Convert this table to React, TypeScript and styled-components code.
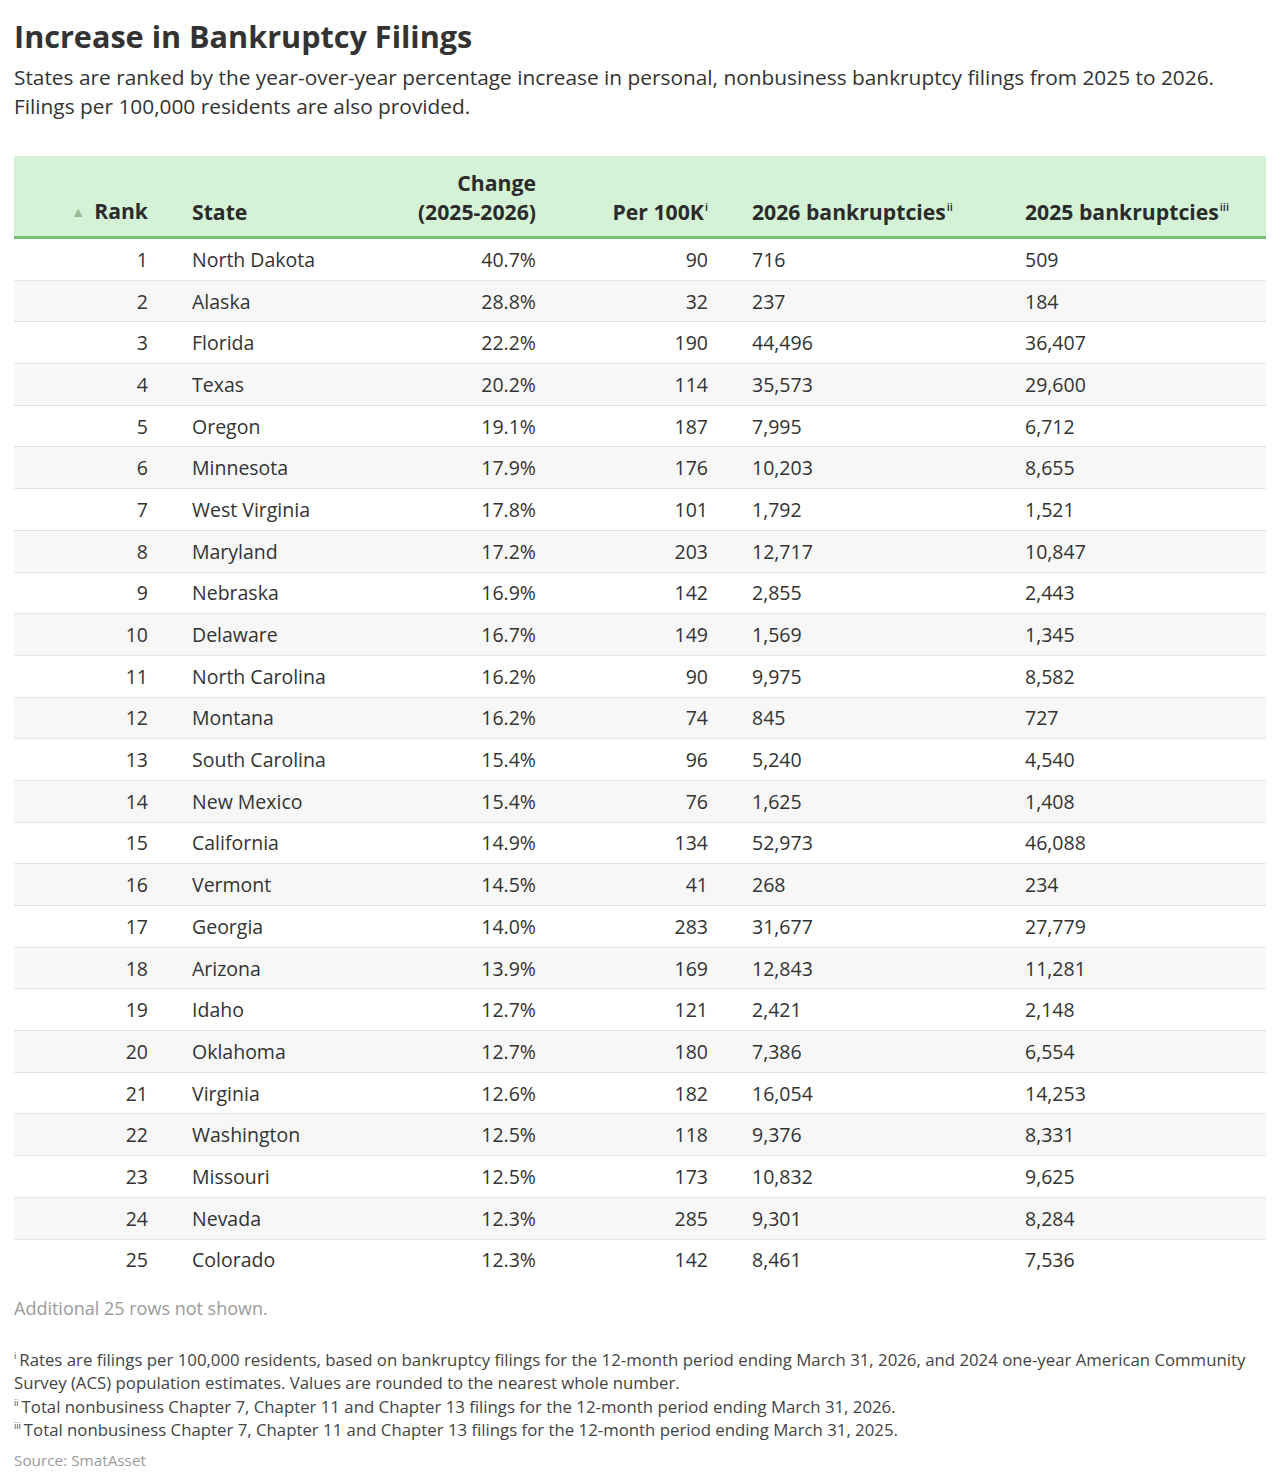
import React from "react";
import styled, { createGlobalStyle } from "styled-components";

const GlobalStyle = createGlobalStyle`
  body {
    margin: 0;
    background: #ffffff;
    font-family: "Open Sans", "Noto Sans", sans-serif;
    color: #333333;
  }
`

const Page = styled.div`
  padding: 16px 14px 12px 14px;
`

const Title = styled.h1`
  margin: 0;
  font-size: 30.6px;
  line-height: 40px;
  font-weight: 700;
  color: #333333;
`

const Subtitle = styled.p`
  margin: 7px 0 0 0;
  font-size: 20.85px;
  line-height: 29px;
  color: #333333;
`

const Table = styled.table`
  margin-top: 35px;
  width: 100%;
  border-collapse: collapse;
  table-layout: fixed;
  font-size: 19.5px;
`

const HeadRow = styled.tr`
  background: #d4f3d6;
  border-bottom: 3px solid #74c06c;
`

const HeadCell = styled.th<{ $align?: "left" | "right" }>`
  height: 70px;
  padding: 0 22px 10px 22px;
  vertical-align: bottom;
  text-align: ${p => p.$align || "left"};
  font-size: 21.2px;
  font-weight: 700;
  line-height: 29px;
  color: #2b2b2b;
  white-space: nowrap;
`

const Row = styled.tr<{ $shade: boolean; $last: boolean }>`
  background: ${p => (p.$shade ? "#f7f7f7" : "#ffffff")};
  border-bottom: ${p => (p.$last ? "none" : "1px solid #e4e4e4")};
`

const Cell = styled.td<{ $align?: "left" | "right" }>`
  height: 40.7px;
  padding: 0 22px;
  text-align: ${p => p.$align || "left"};
  vertical-align: middle;
  color: #333333;
  white-space: nowrap;
`

const Sup = styled.sup`
  font-size: 11px;
  font-weight: 600;
  line-height: 0;
  vertical-align: 9px;
  margin-left: 1px;
`

const SortArrow = styled.span`
  font-size: 14px;
  color: #98b898;
  margin-right: 9px;
  vertical-align: 2px;
`

const Note = styled.div`
  margin-top: 16px;
  font-size: 18px;
  line-height: 24px;
  color: #9b9b9b;
`

const Footnotes = styled.div`
  margin-top: 28px;
  font-size: 16.8px;
  line-height: 23.3px;
  color: #444444;
`

const FootSup = styled.sup`
  font-size: 9px;
  line-height: 0;
  vertical-align: 7px;
  margin-right: 3px;
`

const Source = styled.div`
  margin-top: 8px;
  font-size: 15.3px;
  line-height: 22px;
  color: #9b9b9b;
`

type Entry = [string, string, string, string, string]

const rows: Entry[] = [
  ["North Dakota", "40.7%", "90", "716", "509"],
  ["Alaska", "28.8%", "32", "237", "184"],
  ["Florida", "22.2%", "190", "44,496", "36,407"],
  ["Texas", "20.2%", "114", "35,573", "29,600"],
  ["Oregon", "19.1%", "187", "7,995", "6,712"],
  ["Minnesota", "17.9%", "176", "10,203", "8,655"],
  ["West Virginia", "17.8%", "101", "1,792", "1,521"],
  ["Maryland", "17.2%", "203", "12,717", "10,847"],
  ["Nebraska", "16.9%", "142", "2,855", "2,443"],
  ["Delaware", "16.7%", "149", "1,569", "1,345"],
  ["North Carolina", "16.2%", "90", "9,975", "8,582"],
  ["Montana", "16.2%", "74", "845", "727"],
  ["South Carolina", "15.4%", "96", "5,240", "4,540"],
  ["New Mexico", "15.4%", "76", "1,625", "1,408"],
  ["California", "14.9%", "134", "52,973", "46,088"],
  ["Vermont", "14.5%", "41", "268", "234"],
  ["Georgia", "14.0%", "283", "31,677", "27,779"],
  ["Arizona", "13.9%", "169", "12,843", "11,281"],
  ["Idaho", "12.7%", "121", "2,421", "2,148"],
  ["Oklahoma", "12.7%", "180", "7,386", "6,554"],
  ["Virginia", "12.6%", "182", "16,054", "14,253"],
  ["Washington", "12.5%", "118", "9,376", "8,331"],
  ["Missouri", "12.5%", "173", "10,832", "9,625"],
  ["Nevada", "12.3%", "285", "9,301", "8,284"],
  ["Colorado", "12.3%", "142", "8,461", "7,536"],
]

const App = () => {
  return (
    <Page>
      <GlobalStyle />
      <Title>Increase in Bankruptcy Filings</Title>
      <Subtitle>
        States are ranked by the year-over-year percentage increase in personal, nonbusiness bankruptcy filings from 2025 to 2026.
        <br />
        Filings per 100,000 residents are also provided.
      </Subtitle>

      <Table>
        <colgroup>
          <col style={{ width: 156 }} />
          <col style={{ width: 200 }} />
          <col style={{ width: 188 }} />
          <col style={{ width: 172 }} />
          <col style={{ width: 273 }} />
          <col style={{ width: 263 }} />
        </colgroup>
        <thead>
          <HeadRow>
            <HeadCell $align="right"><SortArrow>▲</SortArrow>Rank</HeadCell>
            <HeadCell>State</HeadCell>
            <HeadCell $align="right">Change<br />(2025-2026)</HeadCell>
            <HeadCell $align="right">Per 100K<Sup>i</Sup></HeadCell>
            <HeadCell>2026 bankruptcies<Sup>ii</Sup></HeadCell>
            <HeadCell>2025 bankruptcies<Sup>iii</Sup></HeadCell>
          </HeadRow>
        </thead>
        <tbody>
          {rows.map((r, i) => (
            <Row key={r[0]} $shade={i % 2 === 1} $last={i === rows.length - 1}>
              <Cell $align="right">{i + 1}</Cell>
              <Cell>{r[0]}</Cell>
              <Cell $align="right">{r[1]}</Cell>
              <Cell $align="right">{r[2]}</Cell>
              <Cell>{r[3]}</Cell>
              <Cell>{r[4]}</Cell>
            </Row>
          ))}
        </tbody>
      </Table>

      <Note>Additional 25 rows not shown.</Note>

      <Footnotes>
        <div>
          <FootSup>i</FootSup>Rates are filings per 100,000 residents, based on bankruptcy filings for the 12-month period ending March 31, 2026, and 2024 one-year American Community Survey (ACS) population estimates. Values are rounded to the nearest whole number.
        </div>
        <div>
          <FootSup>ii</FootSup>Total nonbusiness Chapter 7, Chapter 11 and Chapter 13 filings for the 12-month period ending March 31, 2026.
        </div>
        <div>
          <FootSup>iii</FootSup>Total nonbusiness Chapter 7, Chapter 11 and Chapter 13 filings for the 12-month period ending March 31, 2025.
        </div>
      </Footnotes>
      <Source>Source: SmatAsset</Source>
    </Page>
  )
}

export default App
